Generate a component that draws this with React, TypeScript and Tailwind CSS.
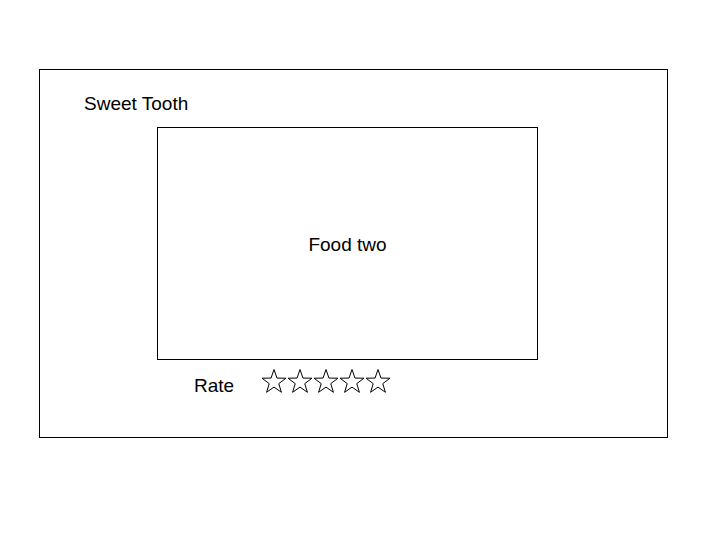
import React from 'react';

const STAR_POINTS =
  '13,0.5 15.94,9.06 24.98,9.21 17.76,14.65 20.41,23.29 13,18.1 5.59,23.29 8.24,14.65 1.02,9.21 10.06,9.06';

function Star() {
  return (
    <svg width="26" height="24" viewBox="0 0 26 24" className="block shrink-0">
      <polygon points={STAR_POINTS} fill="none" stroke="#000" strokeWidth="1" strokeLinejoin="miter" />
    </svg>
  );
}

export default function App() {
  return (
    <div
      className="w-[720px] h-[540px] bg-white text-black pt-[69px] pl-[39px]"
      style={{ fontFamily: '"Liberation Sans", Arial, sans-serif' }}
    >
      <div className="w-[629px] h-[369px] border border-black pt-[23px]">
        <div className="ml-[44px] text-[19px] leading-[21px]">Sweet Tooth</div>
        <div className="mt-[13px] ml-[117px] w-[381px] h-[233px] border border-black flex items-center justify-center">
          <span className="text-[19px] leading-[21px] pt-[2px]">Food two</span>
        </div>
        <div className="mt-[9px] ml-[154px] flex items-start">
          <span className="w-[67px] mt-[6px] text-[19px] leading-[21px]">Rate</span>
          <div className="flex">
            {[0, 1, 2, 3, 4].map(i => (
              <Star key={i} />
            ))}
          </div>
        </div>
      </div>
    </div>
  );
}
